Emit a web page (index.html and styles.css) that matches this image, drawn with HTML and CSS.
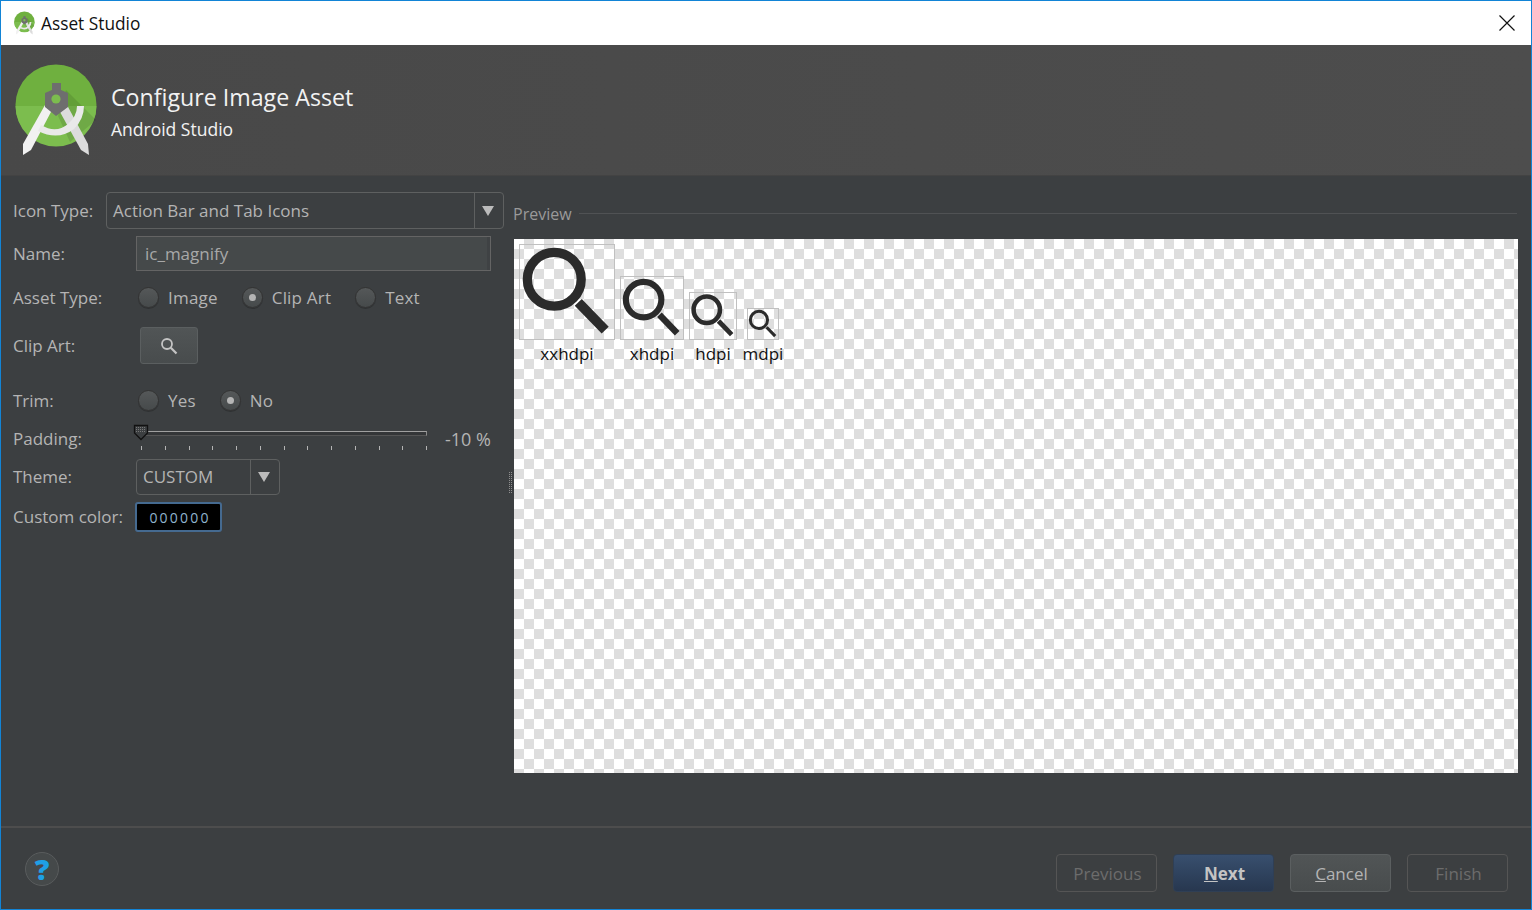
FILE: index.html
```html
<!DOCTYPE html>
<html lang="en">
<head>
<meta charset="utf-8">
<title>Asset Studio</title>
<link rel="stylesheet" href="styles.css">
</head>
<body>
<svg class="defs" width="0" height="0" aria-hidden="true">
  <defs>
    <symbol id="as-logo" viewBox="15 64 83 92">
      <circle cx="56" cy="105" r="40.5" fill="#6fb03f"/>
      <path d="M15.5 106 H96.5 A40.5 40.5 0 0 1 15.5 106Z" fill="#7cbd4e"/>
      <path d="M66 90 L96 120 L70 142 L58 116Z" fill="#000" opacity=".1"/>
      <path d="M45 105 L52 110 L31 150 L23 155 L23 144Z" fill="#f1f1f1"/>
      <path d="M67 105 L60 112 L81 150 L89 155 L88 144Z" fill="#dcdcdc"/>
      <path d="M41 125 Q56 134 68 124 Q77 116 77 106 L84 106 Q84 119 74 129 Q58 141 38 131Z" fill="#e9e9e9"/>
      <path d="M52 83 H61 V90 L68 93 V107 L56 116 L45 107 V93 L52 90Z" fill="#6e6e6e"/>
      <circle cx="56" cy="99" r="4.6" fill="#7cbd4e"/>
    </symbol>
    <symbol id="magnifier" viewBox="0 0 96 96">
      <circle cx="35" cy="35" r="27.5" fill="none" stroke="#2b2b2b" stroke-width="9.5"/>
      <path d="M59.5 58.5 L87 87" fill="none" stroke="#2b2b2b" stroke-width="10"/>
    </symbol>
  </defs>
</svg>
<div class="window">
  <header class="titlebar">
    <svg class="title-logo"><use href="#as-logo"/></svg>
    <span class="title-text">Asset Studio</span>
    <svg class="close" viewBox="0 0 16 16"><path d="M0.5 0.5 L15.5 15.5 M15.5 0.5 L0.5 15.5" stroke="#111" stroke-width="1.2" fill="none"/></svg>
  </header>
  <section class="banner">
    <svg class="banner-logo"><use href="#as-logo"/></svg>
    <div class="banner-text">
      <div class="banner-title">Configure Image Asset</div>
      <div class="banner-sub">Android Studio</div>
    </div>
  </section>
  <main class="content">
    <form class="form">
      <div class="row row-icon">
        <span class="label label-auto">Icon Type:</span>
        <div class="combo combo-wide"><span class="combo-value">Action Bar and Tab Icons</span><span class="combo-arrow"></span></div>
      </div>
      <div class="row row-name">
        <span class="label">Name:</span>
        <div class="textfield">ic_magnify</div>
      </div>
      <div class="row row-asset">
        <span class="label">Asset Type:</span>
        <span class="radio radio-first"></span><span class="radio-text">Image</span>
        <span class="radio on"></span><span class="radio-text">Clip Art</span>
        <span class="radio"></span><span class="radio-text">Text</span>
      </div>
      <div class="row row-clip">
        <span class="label">Clip Art:</span>
        <div class="clip-btn"><svg width="18" height="18" viewBox="0 0 18 18"><circle cx="7" cy="7" r="5" fill="none" stroke="#c4c4c4" stroke-width="1.8"/><path d="M10.8 10.8 L16.5 16.5" stroke="#c4c4c4" stroke-width="2.2"/></svg></div>
      </div>
      <div class="row row-trim">
        <span class="label">Trim:</span>
        <span class="radio radio-first"></span><span class="radio-text">Yes</span>
        <span class="radio on"></span><span class="radio-text">No</span>
      </div>
      <div class="row row-padding">
        <span class="label">Padding:</span>
        <div class="slider">
          <div class="track"></div>
          <div class="ticks"><i></i><i></i><i></i><i></i><i></i><i></i><i></i><i></i><i></i><i></i><i></i><i></i><i></i></div>
          <svg class="thumb" width="16" height="17" viewBox="0 0 16 17"><path d="M1.5 1.5 H14.5 V9 L8 15.5 L1.5 9Z" fill="#3c3f41" stroke="#111" stroke-width="1.3"/><path d="M3 3.5 H13 M3 5.5 H13 M3 7.5 H13" stroke="#777" stroke-width="1" stroke-dasharray="1 1"/></svg>
        </div>
        <span class="percent">-10 %</span>
      </div>
      <div class="row row-theme">
        <span class="label">Theme:</span>
        <div class="combo combo-theme"><span class="combo-value">CUSTOM</span><span class="combo-arrow"></span></div>
      </div>
      <div class="row row-color">
        <span class="label">Custom color:</span>
        <div class="colorbox">000000</div>
      </div>
    </form>
    <div class="splitter"></div>
    <section class="preview">
      <div class="preview-head"><span class="preview-title">Preview</span><div class="preview-line"></div></div>
      <div class="canvas">
        <figure class="density"><div class="box box96"><svg><use href="#magnifier"/></svg></div><figcaption>xxhdpi</figcaption></figure>
        <figure class="density"><div class="box box64"><svg><use href="#magnifier"/></svg></div><figcaption>xhdpi</figcaption></figure>
        <figure class="density density-gap"><div class="box box48"><svg><use href="#magnifier"/></svg></div><figcaption>hdpi</figcaption></figure>
        <figure class="density"><div class="box box32"><svg><use href="#magnifier"/></svg></div><figcaption>mdpi</figcaption></figure>
      </div>
    </section>
  </main>
  <footer class="footer">
    <div class="help">?</div>
    <div class="buttons">
      <div class="btn disabled">Previous</div>
      <div class="btn primary"><u>N</u>ext</div>
      <div class="btn cancel"><u>C</u>ancel</div>
      <div class="btn disabled">Finish</div>
    </div>
  </footer>
</div>
</body>
</html>
```

FILE: styles.css
```css
* { box-sizing: border-box; }
html, body { margin: 0; padding: 0; width: 1532px; height: 910px; overflow: hidden; }
body { font-family: "Open Sans", "Noto Sans", sans-serif; font-size: 17px; color: #b4b4b4; background: #3c3f41; }
.defs { position: absolute; }
.window { width: 1532px; height: 910px; border: 1px solid #1284d6; display: flex; flex-direction: column; background: #3c3f41; }

.titlebar { height: 44px; background: #fff; display: flex; align-items: center; padding-left: 13px; color: #111; flex: none; }
.title-logo { width: 21px; height: 24px; margin-right: 6px; margin-top: -1px; }
.title-text { font-size: 17.3px; }
.close { width: 16px; height: 16px; margin-left: auto; margin-right: 16px; }

.banner { height: 131px; flex: none; background: linear-gradient(90deg, #484848, #4d4d4d); display: flex; align-items: center; padding-left: 14px; border-bottom: 1px solid #434343; }
.banner-logo { width: 83px; height: 92px; margin-right: 13px; }
.banner-text { color: #f2f2f2; margin-top: 6px; }
.banner-title { font-size: 23.2px; line-height: 32px; }
.banner-sub { font-size: 17.5px; line-height: 32px; }

.content { flex: 1; display: flex; min-height: 0; }
.form { width: 504px; flex: none; padding: 16px 0 0 12px; display: flex; flex-direction: column; }
.row { display: flex; align-items: center; flex: none; }
.label { width: 123px; flex: none; }
.label-auto { width: 93px; }
.row-icon { height: 37px; }
.row-name { height: 35px; margin-top: 7px; }
.row-asset { height: 25px; margin-top: 14px; }
.row-clip { height: 37px; margin-top: 17px; }
.row-trim { height: 25px; margin-top: 24px; }
.row-padding { height: 25px; margin-top: 13px; }
.row-theme { height: 36px; margin-top: 8px; }
.row-color { height: 30px; margin-top: 7px; }
.row-theme .label, .row-color .label, .combo-theme .combo-value { margin-top: -2px; }

.combo { height: 100%; border: 1px solid #5e6060; border-radius: 4px; display: flex; align-items: center; }
.combo-wide { width: 398px; }
.combo-theme { width: 144px; }
.combo-value { flex: 1; padding-left: 6px; }
.combo-arrow { width: 29px; height: 100%; border-left: 1px solid #5e6060; position: relative; flex: none; }
.combo-arrow::after { content: ""; position: absolute; left: 7px; top: 50%; margin-top: -5px; border: 6.5px solid transparent; border-top: 10px solid #bbb; border-bottom: 0; }

.textfield { width: 355px; height: 100%; background: #45494a; border: 1px solid #646464; box-shadow: inset -3px 0 0 #3f4244; padding-left: 8px; display: flex; align-items: center; color: #a8a8a8; }

.radio { width: 21px; height: 21px; border-radius: 50%; background: linear-gradient(#555859, #464a4b); border: 1px solid #333; box-shadow: 0 1px 0 #2f3133; position: relative; flex: none; margin-left: 24px; }
.radio-first { margin-left: 2px; }
.radio.on::after { content: ""; position: absolute; left: 6px; top: 6px; width: 7px; height: 7px; border-radius: 50%; background: #b5b5b5; }
.radio-text { margin-left: 9px; letter-spacing: .2px; }

.clip-btn { width: 58px; height: 100%; margin-left: 4px; background: linear-gradient(#515556, #484c4d); border: 1px solid #5b5f60; border-radius: 3px; display: flex; align-items: center; justify-content: center; }

.slider { width: 294px; height: 25px; position: relative; padding: 5px 3px 0 5px; }
.track { height: 5px; background: #343638; border: 1px solid #8b8b8b; border-top-color: #a0a0a0; border-bottom-color: #555; }
.ticks { display: flex; justify-content: space-between; margin-top: 10px; }
.ticks i { width: 1px; height: 4px; background: #b5b5b5; display: block; }
.thumb { position: absolute; left: -3px; top: -2px; }
.percent { margin-left: 15px; font-size: 18px; }

.colorbox { width: 87px; height: 100%; margin-left: -1px; background: #000; border: 2px solid #456a90; border-radius: 3px; color: #8fb4cf; font-size: 14px; letter-spacing: 2.2px; padding-left: 3px; display: flex; align-items: center; justify-content: center; }

.splitter { width: 4px; height: 22px; flex: none; margin: 296px 0 0 3px; background-image: conic-gradient(#8f8f8f 25%, transparent 0); background-size: 2px 2px; }

.preview { flex: 1; display: flex; flex-direction: column; padding: 0 13px 0 2px; }
.preview-head { height: 40px; padding-top: 34px; margin-left: -1px; display: flex; align-items: center; color: #9a9a9a; font-size: 16px; }
.preview-title { margin-top: 2px; }
.preview-line { flex: 1; height: 1px; background: #505254; margin-left: 7px; margin-right: 1px; }
.canvas { margin-top: 23px; width: 1004px; height: 534px; background-color: #fff; background-image: conic-gradient(#dedede 25%, #fff 0 50%, #dedede 0 75%, #fff 0); background-size: 20px 20px; padding: 5px; display: flex; align-items: flex-start; color: #111; }

.density { margin: 0 5px 0 0; height: 120px; display: flex; flex-direction: column; align-items: center; justify-content: flex-end; }
.density-gap { margin-right: 10px; }
.box { border: 1px solid #c0c0c0; margin-bottom: 2px; }
.box svg { display: block; width: 100%; height: 100%; }
.box96 { width: 96px; height: 96px; }
.box64 { width: 64px; height: 64px; }
.box48 { width: 48px; height: 48px; }
.box32 { width: 32px; height: 32px; }
.density figcaption { width: 0; display: flex; justify-content: center; white-space: nowrap; height: 22px; align-items: center; }

.footer { height: 83px; flex: none; border-top: 2px solid #4d4d4d; display: flex; align-items: center; padding: 0 23px 0 24px; }
.help { width: 34px; height: 34px; border-radius: 50%; background: #45494a; border: 1px solid #595c5d; color: #1ea0e6; font-weight: 800; font-size: 29px; display: flex; align-items: center; justify-content: center; }
.buttons { margin-left: auto; display: flex; gap: 16px; margin-top: 9px; }
.btn { width: 101px; height: 38px; border-radius: 4px; display: flex; align-items: center; justify-content: center; border: 1px solid #555; padding-left: 2px; }
.btn.disabled { color: #6c6c6c; }
.btn.primary { background: linear-gradient(#384f6e, #27374f); border-color: #2f3f55; font-weight: 700; color: #c4c4c4; }
.btn.cancel { background: linear-gradient(#515556, #484c4d); border-color: #5b5f60; }
```
